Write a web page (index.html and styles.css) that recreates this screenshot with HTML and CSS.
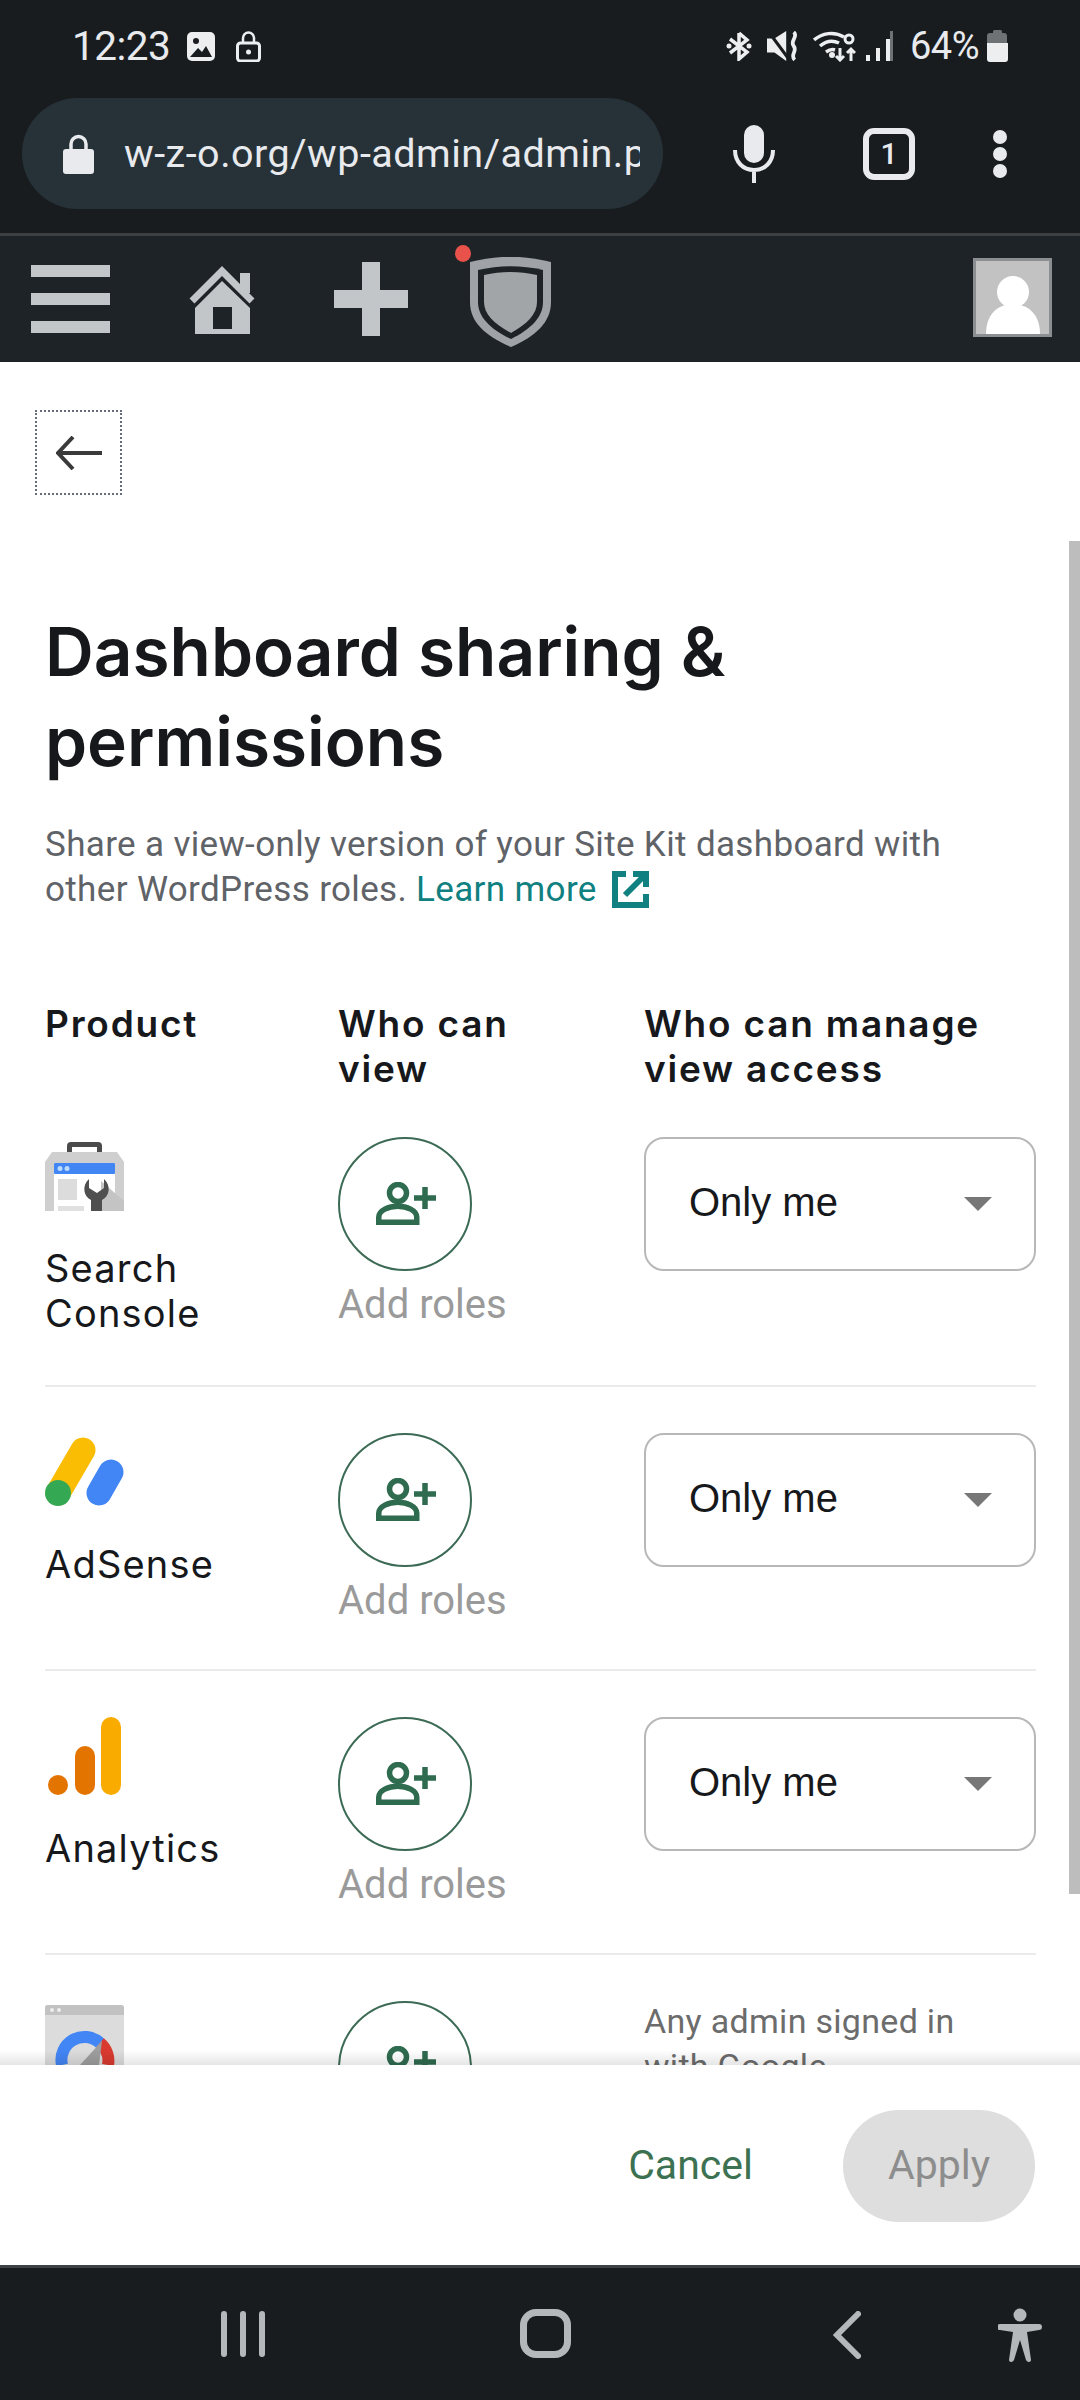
FILE: index.html
```html
<!DOCTYPE html>
<html lang="en">
<head>
    <meta charset="UTF-8">
    <meta name="viewport" content="width=device-width, initial-scale=1.0">
    <title>Dashboard sharing &amp; permissions</title>
    <link rel="stylesheet" href="styles.css">
</head>
<body>
    <svg class="icon-defs" width="0" height="0">
        <symbol id="add-person" viewBox="0 0 60 43">
            <circle cx="22" cy="11" r="8.500" fill="none" stroke="currentColor" stroke-width="5.500"/>
            <path d="M2.750 40.250v-5c0-7 10-11 19-11s19 4 19 11v5z" fill="none" stroke="currentColor" stroke-width="5.500"/>
            <path d="M38 16h22M49 5v22" fill="none" stroke="currentColor" stroke-width="5.500"/>
        </symbol>
    </svg>

    <div class="phone">
        <header class="browser">
            <div class="status">
                <div class="status-left">
                    <span class="clock">12:23</span>
                    <svg class="st-img" viewBox="0 0 28 29"><rect width="28" height="29" rx="5" fill="#eceef0"/><circle cx="9" cy="9" r="3" fill="#191c1f"/><path d="M3 25l8-9 4 4 4-6 6 11z" fill="#191c1f"/></svg>
                    <svg class="st-lock" viewBox="0 0 25 31"><path d="M7 13V7a5.500 5.500 0 0 1 11 0v6" fill="none" stroke="#eceef0" stroke-width="2.500"/><rect x="1.500" y="12" width="22" height="18" rx="3" fill="none" stroke="#eceef0" stroke-width="3"/><circle cx="12.500" cy="21" r="2.500" fill="#eceef0"/></svg>
                </div>
                <div class="status-right">
                    <svg class="st-bt" viewBox="0 0 26 30"><path d="M13 2v26l8-7L4 8M13 2l8 7L4 22" fill="none" stroke="#eceef0" stroke-width="3.500"/><circle cx="3" cy="15" r="2.500" fill="#eceef0"/><circle cx="23" cy="15" r="2.500" fill="#eceef0"/></svg>
                    <svg class="st-mute" viewBox="0 0 30 28"><path d="M0 7h7l11-7v28L7 20H0z" fill="#eceef0"/><path d="M1 0l20 27" stroke="#191c1f" stroke-width="3"/><path d="M25 1c5 4-4 8 0 13s-4 8 1 13" fill="none" stroke="#eceef0" stroke-width="3.500"/></svg>
                    <svg class="st-wifi" viewBox="0 0 43 32"><path d="M1 10c8-7 20-9 30-3M7 16c6-5 13-6 19-3M13 22c3-2 6-3 9-2" fill="none" stroke="#eceef0" stroke-width="3.500"/><circle cx="19" cy="25" r="3" fill="#eceef0"/><circle cx="36" cy="9" r="4" fill="none" stroke="#eceef0" stroke-width="3"/><path d="M27 18v12m-4-4l4 4 4-4M38 31V19m-4 4l4-4 4 4" fill="none" stroke="#eceef0" stroke-width="3"/></svg>
                    <svg class="st-signal" viewBox="0 0 27 30"><path d="M2 30v-6M12 30V17M22 30V8" stroke="#eceef0" stroke-width="4"/><path d="M25.500 30V0" stroke="#6f7275" stroke-width="3"/></svg>
                    <span class="battery-text">64%</span>
                    <svg class="battery" viewBox="0 0 21 32"><path d="M6 3V1.500q0-1.500 1.500-1.500h6q1.500 0 1.500 1.500V3h2q3 0 3 3v10H0V6q0-3 3-3z" fill="#6f7275"/><path d="M0 13h21v16q0 3-3 3H3q-3 0-3-3z" fill="#eceef0"/></svg>
                </div>
            </div>
            <div class="url-row">
                <div class="url-pill">
                    <svg class="url-lock" viewBox="0 0 31 40"><path d="M8 17V10a7.500 7.500 0 0 1 15 0v7" fill="none" stroke="#e8eaed" stroke-width="3.500"/><rect y="15" width="31" height="25" rx="3" fill="#e8eaed"/></svg>
                    <span class="url-text">w-z-o.org/wp-admin/admin.php</span>
                </div>
                <svg class="mic" viewBox="0 0 42 58"><rect x="11" width="20" height="38" rx="10" fill="#e8eaed"/><path d="M2 25c0 12 8 20 19 20s19-8 19-20M21 44v14" fill="none" stroke="#e8eaed" stroke-width="4"/></svg>
                <div class="tabs">1</div>
                <div class="dots"><i></i><i></i><i></i></div>
            </div>
        </header>

        <nav class="adminbar">
            <div class="burger"><i></i><i></i><i></i></div>
            <svg class="ab-home" viewBox="0 0 68 70"><rect x="52" y="9" width="10" height="20" fill="#c3c6c9"/><path d="M4 37L34 7l30 30" fill="none" stroke="#c3c6c9" stroke-width="7"/><path fill-rule="evenodd" d="M7 70V44l27-27 28 27v26zM25 43v22h19V43z" fill="#c3c6c9"/></svg>
            <svg class="ab-plus" viewBox="0 0 74 74"><path d="M28 0h18v28h28v18H46v28H28V46H0V28h28z" fill="#c3c6c9"/></svg>
            <div class="ab-shield">
                <span class="red-dot"></span>
                <svg viewBox="0 0 81 90"><path d="M0 5c28-7 53-7 81 0v40c0 20-15 34-40 45C15 79 0 65 0 45z" fill="#9fa3a7"/><path d="M8 13c22-5 43-5 65 0v32c0 15-12 27-32 37C20 72 8 60 8 45z" fill="#1d2327"/><path d="M14 18c18-4 35-4 53 0v27c0 12-10 22-26 31C24 67 14 57 14 45z" fill="#a2a5a8"/></svg>
            </div>
            <div class="avatar">
                <svg viewBox="0 0 73 73"><rect width="73" height="73" fill="#c2c2c2"/><circle cx="37" cy="31" r="16" fill="#fff"/><path d="M10 73c0-20 12-30 27-30s27 10 27 30z" fill="#fff"/></svg>
            </div>
        </nav>

        <main class="dialog">
            <div class="scrollbar"></div>
            <div class="dialog-scroll">
                <button class="back">
                    <svg viewBox="0 0 46 34"><path d="M46 17H3M17 1L2 17l15 16" fill="none" stroke="#3a3a3a" stroke-width="4"/></svg>
                </button>

                <h1>Dashboard sharing &amp; permissions</h1>
                <p class="intro">Share a view-only version of your Site Kit dashboard with other WordPress roles. <a href="#">Learn more</a>
                    <svg class="ext" viewBox="0 0 37 37"><path d="M14 3H3v31h31V23" fill="none" stroke="#108080" stroke-width="6"/><path d="M21 3h13v13M33 4L13 24" fill="none" stroke="#108080" stroke-width="6"/></svg>
                </p>

                <div class="row head">
                    <div>Product</div>
                    <div>Who can<br>view</div>
                    <div>Who can manage view access</div>
                </div>

                <div class="row">
                    <div class="product">
                        <svg class="logo" viewBox="0 0 79 70">
                            <path d="M22 12V5q0-4 4-4h27q4 0 4 4v7h-5V6H27v6z" fill="#4b4b4b"/>
                            <path d="M7 11h65l7 10v49H0V21z" fill="#cfcfcf"/>
                            <rect x="9" y="22" width="61" height="48" fill="#fff"/>
                            <rect x="9" y="22" width="61" height="11" rx="1" fill="#4285f4"/>
                            <circle cx="15" cy="27.500" r="2.500" fill="#bcdcff"/><circle cx="22" cy="27.500" r="2.500" fill="#bcdcff"/>
                            <rect x="13" y="38" width="19" height="21" fill="#dcdcdc"/>
                            <rect x="13" y="65" width="26" height="5" fill="#e0e0e0"/>
                            <path d="M56 40l23 20v10H56z" fill="#c4c4c4"/>
                            <path d="M44 38c-7 6-6 17 2 21v11h11V59c8-4 9-15 2-21v9l-7 5-8-5z" fill="#4f4f4f"/>
                        </svg>
                        <div class="name">Search<br>Console</div>
                    </div>
                    <div class="roles">
                        <button class="add"><svg><use href="#add-person"/></svg></button>
                        <div class="roles-label">Add roles</div>
                    </div>
                    <div class="select">Only me<span class="caret"></span></div>
                </div>

                <div class="row">
                    <div class="product">
                        <svg class="logo" viewBox="0 0 79 70">
                            <path d="M13 56L38 13" stroke="#fbbc04" stroke-width="25" stroke-linecap="round"/>
                            <path d="M66 35L54 56" stroke="#4285f4" stroke-width="25" stroke-linecap="round"/>
                            <circle cx="13" cy="56" r="13" fill="#34a853"/>
                        </svg>
                        <div class="name">AdSense</div>
                    </div>
                    <div class="roles">
                        <button class="add"><svg><use href="#add-person"/></svg></button>
                        <div class="roles-label">Add roles</div>
                    </div>
                    <div class="select">Only me<span class="caret"></span></div>
                </div>

                <div class="row">
                    <div class="product">
                        <svg class="logo" viewBox="0 0 79 70">
                            <circle cx="13" cy="64" r="10" fill="#e37400"/>
                            <rect x="30" y="25" width="20" height="49" rx="10" fill="#e37400"/>
                            <rect x="56" y="-4" width="20" height="78" rx="10" fill="#f9ab00"/>
                        </svg>
                        <div class="name">Analytics</div>
                    </div>
                    <div class="roles">
                        <button class="add"><svg><use href="#add-person"/></svg></button>
                        <div class="roles-label">Add roles</div>
                    </div>
                    <div class="select">Only me<span class="caret"></span></div>
                </div>

                <div class="row">
                    <div class="product">
                        <svg class="logo" viewBox="0 0 79 70">
                            <rect width="79" height="70" rx="3" fill="#dcdcdc"/>
                            <path d="M0 10V3q0-3 3-3h73q3 0 3 3v7z" fill="#c2c2c2"/>
                            <circle cx="7" cy="5" r="2" fill="#eee"/><circle cx="14" cy="5" r="2" fill="#eee"/>
                            <path d="M17 60A23 23 0 0 1 55 38" fill="none" stroke="#4285f4" stroke-width="12"/>
                            <path d="M55 38A23 23 0 0 1 63 60" fill="none" stroke="#d93a2f" stroke-width="12"/>
                            <path d="M57 36L35 60v8h18z" fill="#9e9e9e"/>
                        </svg>
                    </div>
                    <div class="roles">
                        <button class="add"><svg><use href="#add-person"/></svg></button>
                    </div>
                    <div class="admin-note">Any admin signed in with Google</div>
                </div>
            </div>
        </main>

        <footer class="dialog-footer">
            <button class="cancel">Cancel</button>
            <button class="apply">Apply</button>
        </footer>

        <div class="navbar">
            <div class="nav-recent"><i></i><i></i><i></i></div>
            <div class="nav-home"></div>
            <svg class="nav-back" viewBox="0 0 28 48"><path d="M25 3L4 24l21 21" fill="none" stroke="#b5b8bb" stroke-width="6" stroke-linecap="round"/></svg>
            <svg class="nav-access" viewBox="0 0 44 54"><circle cx="22" cy="7" r="6.500" fill="#b5b8bb"/><path d="M3 16h38q3 0 3 3t-3 3l-12 2 4 28q0 2-2 2t-3-2l-6-20-6 20q-1 2-3 2t-2-2l4-28-13-2q-3 0-3-3t3-3z" fill="#b5b8bb"/></svg>
        </div>
    </div>
</body>
</html>
```
FILE: styles.css
```css
* {
    box-sizing: border-box;
}
body {
    margin: 0;
    background: #fff;
    font-family: 'Roboto', sans-serif;
}
.icon-defs {
    position: absolute;
}
.phone {
    width: 1080px;
    height: 2400px;
    display: flex;
    flex-direction: column;
    overflow: hidden;
}

/* browser chrome */
.browser {
    height: 233px;
    background: #191c1f;
    color: #e8eaed;
    flex-shrink: 0;
}
.status {
    height: 92px;
    padding: 0 72px 0 72px;
    display: flex;
    justify-content: space-between;
    align-items: center;
}
.status-left, .status-right {
    display: flex;
    align-items: center;
}
.clock {
    font-size: 40.500px;
    letter-spacing: -0.5px;
    width: 115px;
}
.st-img {
    width: 28px;
    height: 29px;
    margin-right: 21px;
}
.st-lock {
    width: 25px;
    height: 31px;
}
.st-bt {
    width: 26px;
    height: 30px;
    margin-right: 15px;
}
.st-mute {
    width: 32px;
    height: 30px;
    margin-right: 14px;
}
.st-wifi {
    width: 43px;
    height: 32px;
    margin-right: 10px;
}
.st-signal {
    width: 27px;
    height: 30px;
    margin-right: 17px;
}
.battery-text {
    font-size: 38px;
    width: 77px;
    letter-spacing: -0.5px;
}
.battery {
    width: 21px;
    height: 32px;
}
.url-row {
    display: flex;
    align-items: center;
    height: 111px;
    margin-top: 6px;
    padding-left: 22px;
}
.url-pill {
    width: 641px;
    height: 111px;
    border-radius: 56px;
    background: #263238;
    padding: 0 23px 0 41px;
    display: flex;
    align-items: center;
    overflow: hidden;
}
.url-lock {
    width: 31px;
    height: 40px;
    flex-shrink: 0;
    margin-right: 30px;
}
.url-text {
    flex: 1;
    min-width: 0;
    font-size: 39.500px;
    letter-spacing: 0.5px;
    white-space: nowrap;
    overflow: hidden;
}
.mic {
    width: 42px;
    height: 58px;
    margin-left: 70px;
}
.tabs {
    width: 52px;
    height: 52px;
    margin-left: 88px;
    border: 6px solid #e8eaed;
    border-radius: 11px;
    font-size: 30px;
    font-weight: 500;
    display: flex;
    align-items: center;
    justify-content: center;
}
.dots {
    margin-left: 78px;
    display: flex;
    flex-direction: column;
    gap: 3px;
}
.dots i {
    display: block;
    width: 14px;
    height: 14px;
    border-radius: 50%;
    background: #e8eaed;
}

/* wp admin bar */
.adminbar {
    height: 129px;
    flex-shrink: 0;
    background: #1d2327;
    border-top: 3px solid #3c4043;
    display: flex;
    align-items: center;
    padding-left: 31px;
}
.burger {
    width: 79px;
    display: flex;
    flex-direction: column;
    gap: 16px;
}
.burger i {
    display: block;
    height: 12px;
    background: #c3c6c9;
}
.ab-home {
    width: 68px;
    height: 70px;
    margin-left: 78px;
}
.ab-plus {
    width: 74px;
    height: 74px;
    margin-left: 78px;
}
.ab-shield {
    position: relative;
    width: 81px;
    height: 90px;
    margin-left: 62px;
    margin-top: 6px;
}
.ab-shield svg {
    display: block;
}
.red-dot {
    position: absolute;
    left: -15px;
    top: -12px;
    width: 16px;
    height: 17px;
    border-radius: 50%;
    background: #e9524a;
}
.avatar {
    width: 79px;
    height: 79px;
    margin: 0 28px 3px auto;
    border: 3px solid #8c8f92;
}
.avatar svg {
    display: block;
}

/* dialog */
.dialog {
    position: relative;
    flex: 1;
    min-height: 0;
    overflow: hidden;
    background: #fff;
}
.scrollbar {
    position: absolute;
    right: 0;
    top: 179px;
    width: 11px;
    height: 1353px;
    background: #bdbdbd;
}
.dialog-scroll {
    padding: 48px 44px 0 45px;
}
.back {
    display: flex;
    align-items: center;
    justify-content: center;
    width: 87px;
    height: 85px;
    margin-left: -10px;
    padding: 0;
    background: #fff;
    border: 2px dotted #666c7a;
}
.back svg {
    width: 46px;
    height: 34px;
}
h1 {
    margin: 112px 0 0;
    font-family: 'Inter', sans-serif;
    font-size: 67.500px;
    font-weight: 600;
    line-height: 90px;
    color: #16181b;
    max-width: 800px;
}
.intro {
    margin: 35px 0 0;
    max-width: 940px;
    font-size: 35px;
    line-height: 45px;
    color: #5f6368;
    letter-spacing: 0.35px;
}
.intro a {
    color: #108080;
    text-decoration: none;
}
.ext {
    width: 37px;
    height: 37px;
    margin-left: 6px;
    vertical-align: -7px;
}
.row {
    display: grid;
    grid-template-columns: 293px 306px 392px;
    padding: 46px 0 44px;
    border-bottom: 2px solid #ebebeb;
}
.row.head {
    padding: 89px 0 46px;
    border-bottom: none;
    font-family: 'Inter', sans-serif;
    font-size: 37px;
    font-weight: 600;
    line-height: 45px;
    color: #16181b;
    letter-spacing: 1.8px;
}
.row:nth-of-type(2) {
    padding-top: 0;
}
.logo {
    display: block;
    width: 79px;
    height: 70px;
    margin-top: 4px;
    overflow: visible;
}
.name {
    margin: 35px 0 5px;
    font-family: 'Inter', sans-serif;
    font-size: 38px;
    line-height: 45px;
    color: #16181b;
    letter-spacing: 1.200px;
}
.add {
    display: flex;
    align-items: center;
    justify-content: center;
    width: 134px;
    height: 134px;
    padding: 0;
    background: #fff;
    border: 2px solid #3c6b55;
    border-radius: 50%;
    color: #2f6b4f;
}
.add svg {
    width: 60px;
    height: 43px;
    margin: -1px -1px 0 0;
}
.roles-label {
    margin-top: 10px;
    font-size: 40px;
    line-height: 48px;
    color: #9a9a9a;
}
.select {
    position: relative;
    height: 134px;
    padding: 0 0 3px 43px;
    border: 2px solid #b8b8b8;
    border-radius: 20px;
    font-family: 'Liberation Sans', sans-serif;
    font-size: 40px;
    color: #16181b;
    display: flex;
    align-items: center;
}
.caret {
    position: absolute;
    right: 42px;
    top: 58px;
    border-left: 14px solid transparent;
    border-right: 14px solid transparent;
    border-top: 14px solid #777;
}
.admin-note {
    max-width: 340px;
    margin-top: -2px;
    font-size: 34px;
    line-height: 45px;
    color: #6c6c6c;
    letter-spacing: 0.3px;
}

/* footer */
.dialog-footer {
    position: relative;
    height: 200px;
    flex-shrink: 0;
    background: #fff;
    display: flex;
    align-items: flex-start;
    justify-content: flex-end;
    padding: 45px 45px 0 0;
}
.dialog-footer::before {
    content: "";
    position: absolute;
    left: 0;
    right: 0;
    top: -15px;
    height: 15px;
    background: linear-gradient(rgba(0, 0, 0, 0), rgba(0, 0, 0, 0.1));
}
.cancel, .apply {
    font-family: 'Roboto', sans-serif;
    font-size: 41px;
    border: none;
    background: none;
    padding: 0 0 2px;
}
.cancel {
    color: #3c7251;
    height: 112px;
    margin-right: 90px;
}
.apply {
    width: 192px;
    height: 112px;
    border-radius: 56px;
    background: #dedede;
    color: #8d8d8d;
}

/* android nav */
.navbar {
    position: relative;
    height: 135px;
    flex-shrink: 0;
    background: #191c1f;
    border-top: 3px solid #3e4245;
}
.nav-recent {
    position: absolute;
    left: 221px;
    top: 43px;
    display: flex;
    gap: 13px;
}
.nav-recent i {
    display: block;
    width: 6px;
    height: 46px;
    border-radius: 3px;
    background: #b5b8bb;
}
.nav-home {
    position: absolute;
    left: 520px;
    top: 41px;
    width: 51px;
    height: 49px;
    border: 7px solid #b5b8bb;
    border-radius: 16px;
}
.nav-back {
    position: absolute;
    left: 833px;
    top: 43px;
    width: 28px;
    height: 48px;
}
.nav-access {
    position: absolute;
    left: 998px;
    top: 40px;
    width: 44px;
    height: 54px;
}
```
